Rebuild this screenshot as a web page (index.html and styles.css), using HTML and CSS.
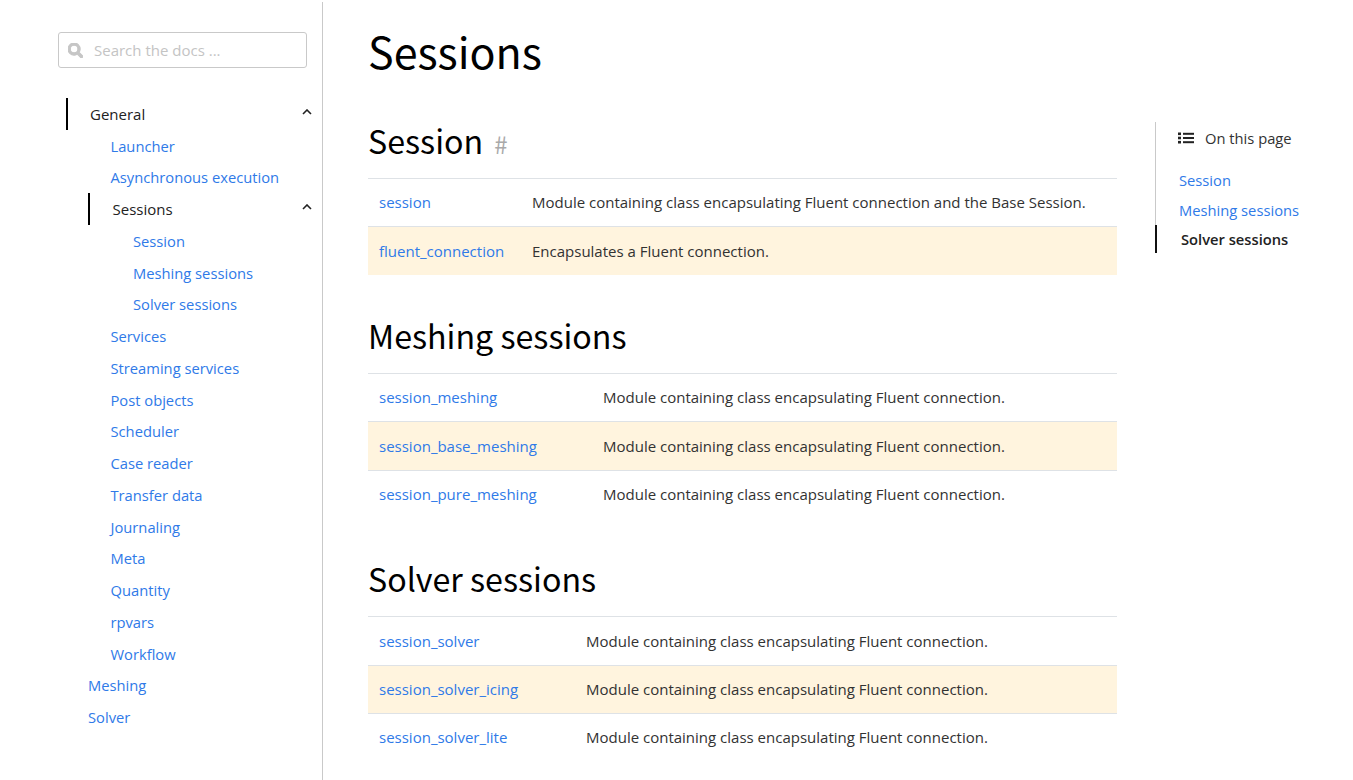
FILE: index.html
```html
<!DOCTYPE html>
<html lang="en">
<head>
  <meta charset="UTF-8" />
  <title>Sessions</title>
  <link rel="stylesheet" href="styles.css">
</head>
<body>
  <div class="page">
    <aside class="sidebar">
      <div class="search">
        <svg class="search-icon" viewBox="0 0 512 512"><path d="M505 442.700L405.300 343c-4.500-4.500-10.600-7-17-7H372c27.600-35.300 44-79.700 44-128C416 93.100 322.900 0 208 0S0 93.100 0 208s93.100 208 208 208c48.300 0 92.700-16.400 128-44v16.300c0 6.400 2.500 12.500 7 17l99.700 99.700c9.400 9.400 24.600 9.400 33.900 0l28.300-28.300c9.400-9.400 9.400-24.600.1-34zM208 336c-70.700 0-128-57.200-128-128 0-70.700 57.200-128 128-128 70.700 0 128 57.200 128 128 0 70.700-57.200 128-128 128z"/></svg>
        <span class="search-text">Search the docs ...</span>
      </div>
      <nav class="nav">
        <div class="nav-item active level-1">General
          <svg class="chev" viewBox="0 0 10 6"><path d="M1 5l4-4 4 4"/></svg>
        </div>
        <a class="nav-item level-2">Launcher</a>
        <a class="nav-item level-2">Asynchronous execution</a>
        <div class="nav-item active level-2 sub-active">Sessions
          <svg class="chev" viewBox="0 0 10 6"><path d="M1 5l4-4 4 4"/></svg>
        </div>
        <a class="nav-item level-3">Session</a>
        <a class="nav-item level-3">Meshing sessions</a>
        <a class="nav-item level-3">Solver sessions</a>
        <a class="nav-item level-2">Services</a>
        <a class="nav-item level-2">Streaming services</a>
        <a class="nav-item level-2">Post objects</a>
        <a class="nav-item level-2">Scheduler</a>
        <a class="nav-item level-2">Case reader</a>
        <a class="nav-item level-2">Transfer data</a>
        <a class="nav-item level-2">Journaling</a>
        <a class="nav-item level-2">Meta</a>
        <a class="nav-item level-2">Quantity</a>
        <a class="nav-item level-2">rpvars</a>
        <a class="nav-item level-2">Workflow</a>
        <a class="nav-item level-1">Meshing</a>
        <a class="nav-item level-1">Solver</a>
      </nav>
    </aside>

    <main class="content">
      <h1>Sessions</h1>

      <h2>Session <span class="anchor">#</span></h2>
      <table class="summary first-table">
        <tr><td><a>session</a></td><td>Module containing class encapsulating Fluent connection and the Base Session.</td></tr>
        <tr class="hl"><td><a>fluent_connection</a></td><td>Encapsulates a Fluent connection.</td></tr>
      </table>

      <h2>Meshing sessions</h2>
      <table class="summary meshing-table">
        <tr><td><a>session_meshing</a></td><td>Module containing class encapsulating Fluent connection.</td></tr>
        <tr class="hl"><td><a>session_base_meshing</a></td><td>Module containing class encapsulating Fluent connection.</td></tr>
        <tr><td><a>session_pure_meshing</a></td><td>Module containing class encapsulating Fluent connection.</td></tr>
      </table>

      <h2>Solver sessions</h2>
      <table class="summary solver-table">
        <tr><td><a>session_solver</a></td><td>Module containing class encapsulating Fluent connection.</td></tr>
        <tr class="hl"><td><a>session_solver_icing</a></td><td>Module containing class encapsulating Fluent connection.</td></tr>
        <tr><td><a>session_solver_lite</a></td><td>Module containing class encapsulating Fluent connection.</td></tr>
      </table>
    </main>

    <aside class="toc">
      <div class="toc-title">
        <svg class="toc-icon" viewBox="0 0 16 12"><rect x="0" y="0.500" width="3" height="2.600"/><rect x="0" y="4.700" width="3" height="2.600"/><rect x="0" y="8.900" width="3" height="2.600"/><rect x="5" y="0.800" width="11" height="2"/><rect x="5" y="5" width="11" height="2"/><rect x="5" y="9.200" width="11" height="2"/></svg>
        On this page
      </div>
      <a class="toc-item">Session</a>
      <a class="toc-item">Meshing sessions</a>
      <div class="toc-item current">Solver sessions</div>
    </aside>
  </div>
</body>
</html>
```

FILE: styles.css
```css
* {
  box-sizing: border-box;
}

body {
  margin: 0;
  height: 780px;
  overflow: hidden;
  background: #fff;
  color: #323232;
  font-family: "Open Sans", sans-serif;
  font-size: 14.72px;
}

a {
  color: #2f7ae8;
  text-decoration: none;
}

.page {
  display: flex;
  align-items: flex-start;
}

/* left nav */
.sidebar {
  width: 323px;
  height: 778px;
  margin-top: 2px;
  padding: 30px 8px 0 58px;
  border-right: 1px solid #c9c9c9;
  flex-shrink: 0;
}

.search {
  display: flex;
  align-items: center;
  width: 249px;
  height: 36px;
  padding-left: 9px;
  border: 1px solid #c9c9c9;
  border-radius: 3px;
}

.search-icon {
  width: 15px;
  height: 15px;
  fill: #c6c6c6;
  stroke: #c6c6c6;
  stroke-width: 36;
}

.search-text {
  margin-left: 11px;
  color: #c4c4c4;
  font-size: 15px;
}

.nav {
  margin-top: 30px;
  margin-left: 8px;
}

.nav-item {
  display: flex;
  align-items: center;
  justify-content: space-between;
  height: 31.75px;
  padding-right: 2px;
}

.level-1 {
  padding-left: 22px;
}

.level-2 {
  padding-left: 44.500px;
}

.level-3 {
  padding-left: 67px;
}

.active {
  color: #222;
  font-size: 15px;
  font-weight: 500;
  border-left: 2px solid #000;
}

.active.level-1 {
  padding-left: 22px;
}

.sub-active {
  margin-left: 22px;
  padding-left: 22.500px;
}

.chev {
  width: 10px;
  height: 6px;
  margin-top: -4px;
  fill: none;
  stroke: #222;
  stroke-width: 1.600;
}

/* main column */
.content {
  width: 749px;
  margin-left: 45px;
  flex-shrink: 0;
  font-size: 15px;
}

h1,
h2 {
  font-family: "Noto Sans CJK SC", "Open Sans", sans-serif;
  font-weight: 400;
  color: #000;
}

h1 {
  margin: 23px 0 0;
  padding-bottom: 2px;
  font-size: 43px;
  line-height: 55px;
}

h2 {
  margin: 39px 0 17px;
  font-size: 32.2px;
  line-height: 42px;
}

.anchor {
  margin-left: 4px;
  color: #a9a9a9;
  font-size: 24px;
  line-height: 1;
}

.summary {
  width: 100%;
  table-layout: fixed;
  border-collapse: collapse;
}

.summary td {
  height: 48.300px;
  padding: 0 0 1px 11px;
  border-top: 1px solid #dee2e6;
}

.summary td:last-child {
  padding-left: 0;
}

.first-table td:first-child {
  width: 164px;
}

.meshing-table td:first-child {
  width: 235px;
}

.solver-table td:first-child {
  width: 218px;
}

.hl td {
  background: #fff4de;
}

/* right toc */
.toc {
  width: 170px;
  margin-top: 122px;
  margin-left: 38px;
  border-left: 1px solid #c9c9c9;
}

.toc-title {
  display: flex;
  align-items: center;
  height: 32px;
  padding-left: 22px;
  margin-bottom: 11px;
}

.toc-icon {
  width: 16px;
  height: 12px;
  margin-right: 11px;
  fill: #222;
}

.toc-item {
  display: flex;
  align-items: center;
  height: 29.750px;
  padding-left: 23px;
}

.current {
  height: 28.500px;
  margin-left: -1px;
  padding-left: 24px;
  border-left: 2px solid #111;
  font-weight: 600;
  color: #222;
}
```
